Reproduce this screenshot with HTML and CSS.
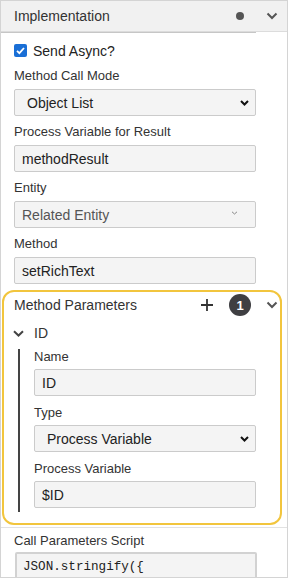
FILE: index.html
```html
<!DOCTYPE html>
<html lang="en">
<head>
    <meta charset="UTF-8">
    <meta name="viewport" content="width=device-width, initial-scale=1.0">
    <title>Implementation</title>
    <link rel="stylesheet" href="styles.css">
</head>
<body>
    <div class="panel">
        <div class="panel-header">
            <span class="panel-title">Implementation</span>
            <span class="dot"></span>
            <svg class="chevron" width="12" height="8" viewBox="0 0 12 8"><path d="M1.5 1.5 L6 6 L10.5 1.5" fill="none" stroke="#555" stroke-width="2"/></svg>
        </div>
        <div class="scroll-edge"></div>
        <div class="content">
            <label class="check-row">
                <span class="checkbox"><svg width="13" height="13" viewBox="0 0 13 13"><path d="M3 6.8 L5.4 9.1 L10 4" fill="none" stroke="#fff" stroke-width="1.8"/></svg></span>
                Send Async?
            </label>

            <div class="field">
                <div class="label">Method Call Mode</div>
                <div class="control select">
                    <span class="select-text">Object List</span>
                    <svg width="9" height="6" viewBox="0 0 9 6"><path d="M1 1 L4.5 4.5 L8 1" fill="none" stroke="#111" stroke-width="2"/></svg>
                </div>
            </div>

            <div class="field">
                <div class="label">Process Variable for Result</div>
                <div class="control">methodResult</div>
            </div>

            <div class="field">
                <div class="label">Entity</div>
                <div class="control select disabled">
                    <span>Related Entity</span>
                    <svg class="small-chevron" width="7" height="4" viewBox="0 0 7 4"><path d="M1 0.8 L3.5 3 L6 0.8" fill="none" stroke="#888" stroke-width="1"/></svg>
                </div>
            </div>

            <div class="field">
                <div class="label">Method</div>
                <div class="control">setRichText</div>
            </div>

            <div class="param-box">
                <div class="param-header">
                    <span class="param-title">Method Parameters</span>
                    <svg class="plus" width="12" height="12" viewBox="0 0 12 12"><path d="M6 0 V12 M0 6 H12" stroke="#333" stroke-width="1.8"/></svg>
                    <span class="badge">1</span>
                    <svg class="chevron" width="12" height="8" viewBox="0 0 12 8"><path d="M1.5 1.5 L6 6 L10.5 1.5" fill="none" stroke="#555" stroke-width="2"/></svg>
                </div>
                <div class="param-row">
                    <svg width="11" height="7" viewBox="0 0 11 7"><path d="M1 1.2 L5.5 5.5 L10 1.2" fill="none" stroke="#444" stroke-width="2"/></svg>
                    <span>ID</span>
                </div>
                <div class="param-group">
                    <div class="field first">
                        <div class="label">Name</div>
                        <div class="control">ID</div>
                    </div>
                    <div class="field">
                        <div class="label">Type</div>
                        <div class="control select">
                            <span class="select-text">Process Variable</span>
                            <svg width="9" height="6" viewBox="0 0 9 6"><path d="M1 1 L4.5 4.5 L8 1" fill="none" stroke="#111" stroke-width="2"/></svg>
                        </div>
                    </div>
                    <div class="field">
                        <div class="label">Process Variable</div>
                        <div class="control">$ID</div>
                    </div>
                </div>
            </div>

            <div class="separator"></div>

            <div class="field script-field">
                <div class="label">Call Parameters Script</div>
                <div class="script">JSON.stringify({</div>
            </div>
        </div>
    </div>
</body>
</html>
```

FILE: styles.css
```css
body {
    margin: 0;
    font-family: 'Liberation Sans', Arial, sans-serif;
    font-size: 14px;
    color: #333;
    background-color: #fff;
}
.panel {
    width: 288px;
    height: 578px;
    box-sizing: border-box;
    border: 1px solid #d4d4d4;
    overflow: hidden;
}
.panel-header {
    display: flex;
    align-items: center;
    height: 30px;
    padding: 0 9px 0 13px;
    background-color: #f1f1f1;
    border-bottom: 1px solid #dcdcdc;
}
.panel-title {
    flex: 1;
}
.dot {
    width: 8px;
    height: 8px;
    border-radius: 50%;
    background-color: #555;
    margin-right: 22px;
}
.chevron {
    display: block;
}
.scroll-edge {
    height: 1px;
    width: 255px;
    background-color: #c6c6c6;
}
.content {
    padding: 0 0 0 13px;
}
.check-row {
    display: flex;
    align-items: center;
    height: 19px;
    margin-top: 8px;
    gap: 6px;
    color: #222;
}
.checkbox {
    display: flex;
    width: 13px;
    height: 13px;
    border-radius: 2px;
    background-color: #1a6fd6;
}
.field {
    margin-top: 8px;
}
.label {
    font-size: 13px;
    line-height: 16px;
    margin-bottom: 5px;
}
.control {
    box-sizing: border-box;
    width: 242px;
    height: 27px;
    padding: 0 7px;
    display: flex;
    align-items: center;
    background-color: #f4f4f4;
    border: 1px solid #cbcbcb;
    border-radius: 2px;
    color: #222;
}
.select {
    justify-content: space-between;
    padding-right: 6px;
}
.select-text {
    padding-left: 5px;
}
.disabled {
    color: #555;
}
.small-chevron {
    margin-right: 11px;
    margin-top: -4px;
}
.param-box {
    margin: 6px 0 0 -12px;
    width: 280px;
    box-sizing: border-box;
    border: 2px solid #f2c53d;
    border-radius: 12px;
    padding: 1px 2px 11px 0;
}
.param-header {
    display: flex;
    align-items: center;
    height: 24px;
    padding-left: 10px;
}
.param-title {
    flex: 1;
}
.plus {
    margin-right: 16px;
}
.badge {
    width: 22px;
    height: 22px;
    border-radius: 50%;
    background-color: #3f3f42;
    color: #fff;
    font-weight: bold;
    font-size: 13px;
    display: flex;
    align-items: center;
    justify-content: center;
    margin-right: 15px;
}
.param-row {
    display: flex;
    align-items: center;
    height: 22px;
    margin-top: 5px;
    padding-left: 9px;
    gap: 10px;
}
.param-group {
    margin: 1px 0 0 14px;
    border-left: 2px solid #444;
    padding: 0 0 4px 14px;
}
.param-group .field {
    margin-top: 9px;
}
.param-group .field.first {
    margin-top: 5px;
}
.param-group .label {
    margin-bottom: 4px;
}
.param-group .control {
    width: 222px;
}
.separator {
    margin: 2px 0 0 -13px;
    border-top: 1px solid #e2e2e2;
}
.script-field {
    margin-top: 5px;
}
.script-field .label {
    margin-bottom: 3px;
}
.script {
    box-sizing: border-box;
    width: 242px;
    height: 40px;
    margin-left: 1px;
    padding: 5px 6px;
    background-color: #f4f4f4;
    border: 2px solid #d2d2d2;
    border-radius: 2px;
    font-family: 'Liberation Mono', 'Courier New', monospace;
    font-size: 12.6px;
    line-height: 16px;
    color: #222;
}
```
